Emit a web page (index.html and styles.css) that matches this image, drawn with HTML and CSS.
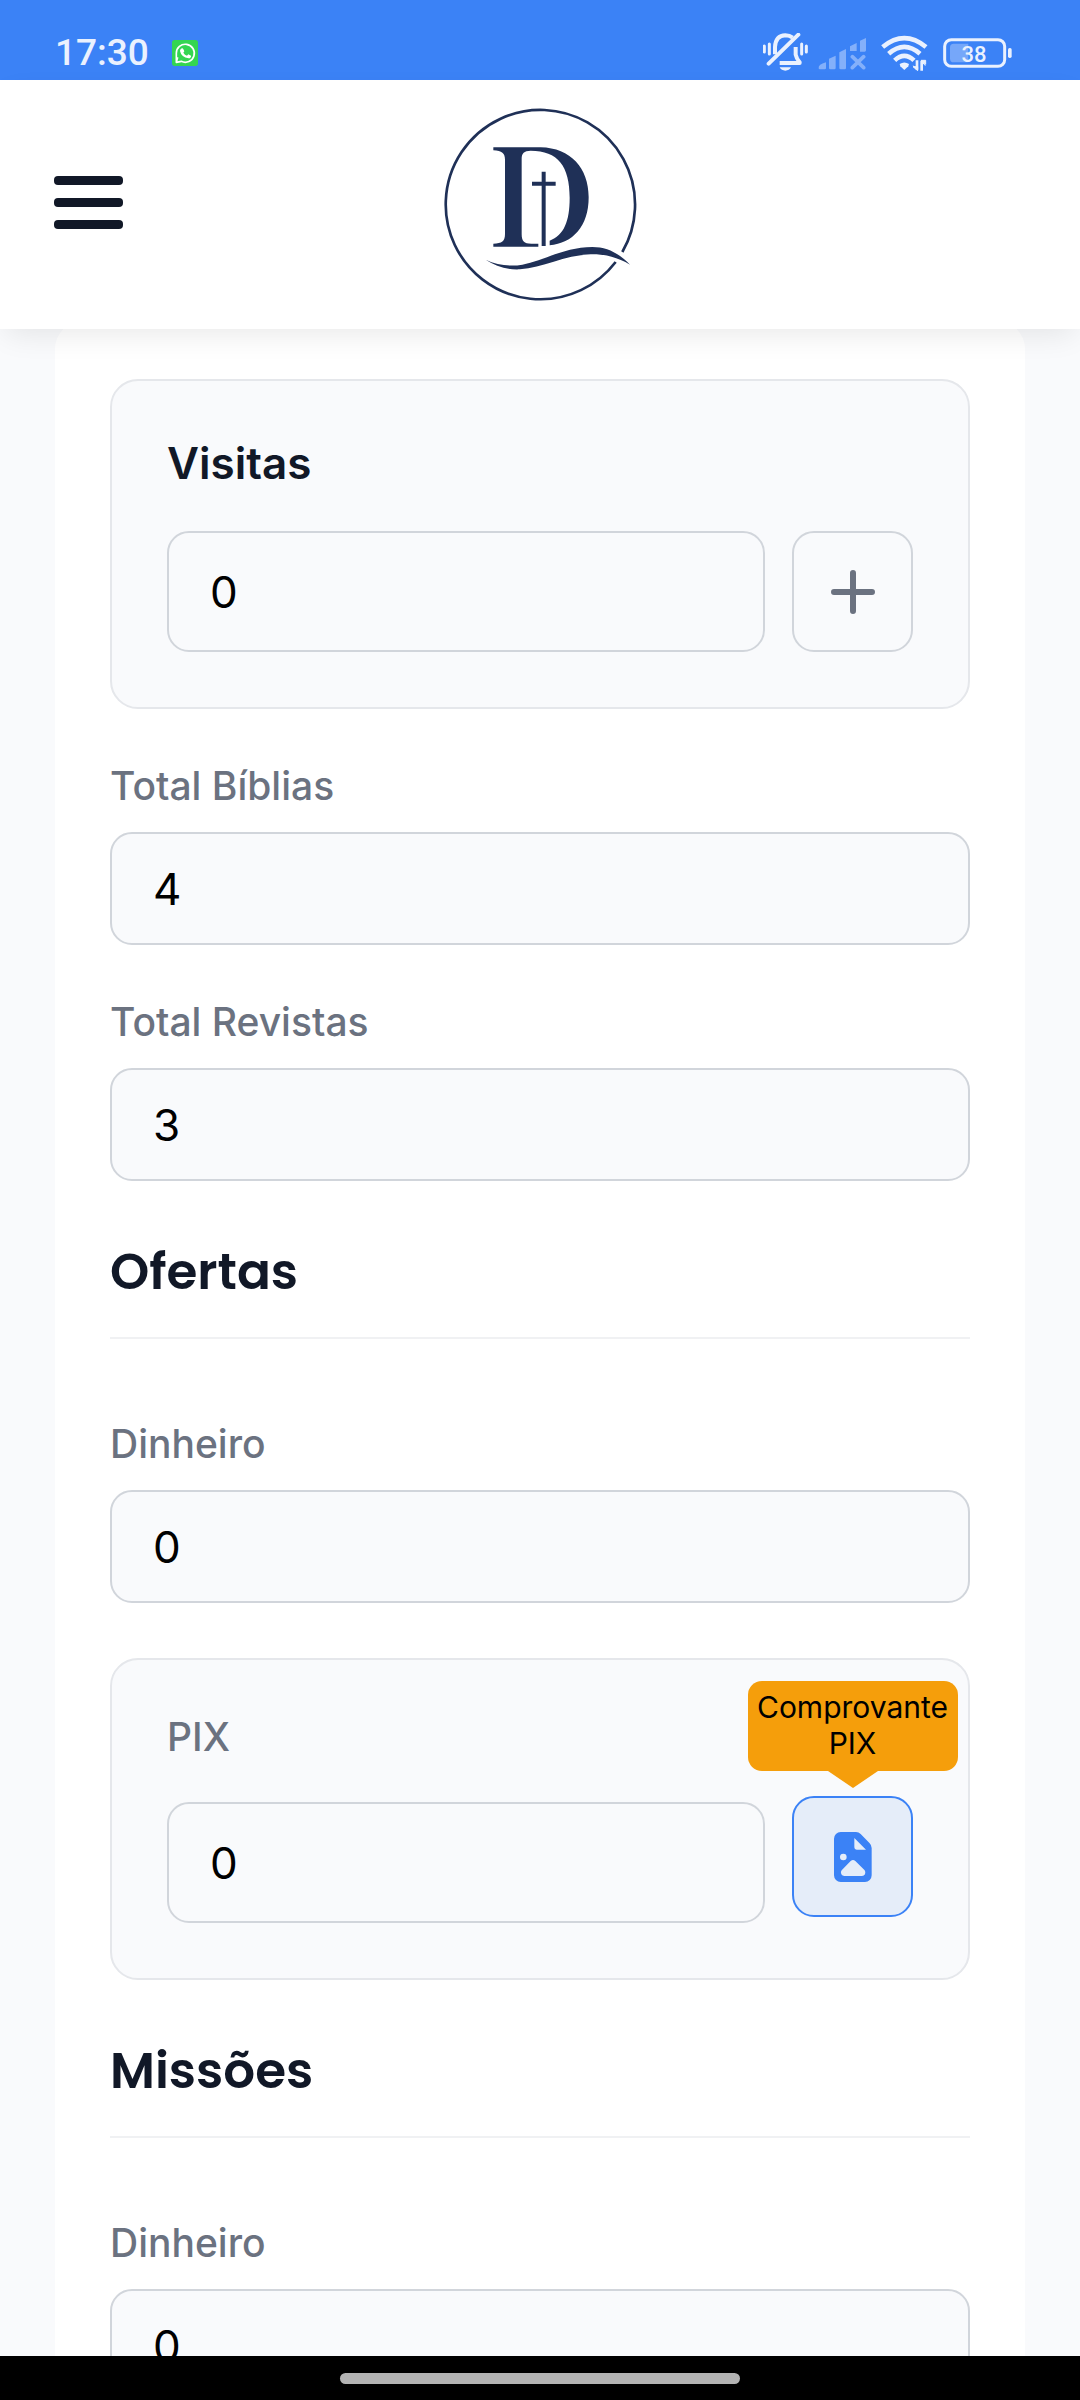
FILE: index.html
```html
<!DOCTYPE html>
<html lang="pt-BR">
<head>
  <meta charset="utf-8">
  <meta name="viewport" content="width=device-width, initial-scale=1">
  <title>Relatório</title>
  <link rel="stylesheet" href="styles.css">
</head>
<body>
  <div class="status">
    <div class="status-group">
      <span class="clock">17:30</span>
      <svg class="status-app" width="26" height="26" viewBox="0 0 78 78" aria-hidden="true">
        <rect width="78" height="78" rx="8" fill="#34d551"/>
        <path d="M13 67V40A27 27 0 1 1 28 64L13 67L17 52" fill="none" stroke="#fff" stroke-width="5" stroke-linejoin="round"/>
        <path d="M27 26q5-4 8 3l2 5-3 4q4 7 11 9l4-4 8 4q1 7-7 8Q28 52 24 33q0-5 3-7z" fill="#fff"/>
      </svg>
    </div>
    <div class="status-group status-icons">
      <svg width="45" height="39" viewBox="0 0 135 117" fill="none" stroke="#eaf1fe" stroke-linecap="round" aria-hidden="true">
        <path d="M4 39v18M19 33v30M116 33v30M130 39v18" stroke-width="9"/>
        <path d="M36 64V42q2-34 31-35q13 0 22 7M98 42V65q2 11 12 23v2H50" stroke-width="12" stroke-linejoin="round" stroke-linecap="butt"/>
        <path d="M17 92L106 5" stroke-width="12"/>
        <path d="M50 103h34q-5 10-17 10t-17-10z" fill="#eaf1fe" stroke="none"/>
      </svg>
      <svg width="48" height="36" viewBox="0 0 144 108" fill="#84b0fa" aria-hidden="true">
        <path d="M2 100q-2-12 22-18v18q0 3-4 3H6q-4 0-4-3zM33 71l20-9v37q0 4-4 4H37q-4 0-4-4zM64 52l20-10v57q0 4-4 4H68q-4 0-4-4zM96 34l20-10v24H96zM126 17l18-8v37q0 4-4 4h-14z"/>
        <path d="M103 65l34 33M137 65l-34 33" stroke="#84b0fa" stroke-width="11" stroke-linecap="round"/>
      </svg>
      <svg width="47" height="36" viewBox="0 0 141 108" fill="none" stroke="#eaf1fe" stroke-width="14" aria-hidden="true">
        <path d="M5 36Q70-17 135 36M23 56Q70 15 117 56M41 76Q70 49 99 76"/>
        <path d="M56 87q14-9 28 0l-2 7-12 11-12-11z" fill="#eaf1fe" stroke="none"/>
        <path d="M108 76v28M122 77v30" stroke-width="8"/>
        <path d="M96 95h14v12zM120 76h14v12zM97 92l11 13M133 92l-11-13" stroke-width="3" fill="#eaf1fe"/>
      </svg>
      <svg class="battery" width="70" height="30" viewBox="0 0 210 90" role="img" aria-label="Bateria 38%">
        <rect x="5" y="5" width="180" height="80" rx="20" fill="none" stroke="#eaf1fe" stroke-width="9"/>
        <path d="M32 17H76V73H32q-11 0-11-11V28q0-11 11-11z" fill="#76a7f9"/>
        <rect x="195" y="30" width="11" height="30" rx="5" fill="#eaf1fe"/>
        <text x="93" y="71" text-anchor="middle">38</text>
      </svg>
    </div>
  </div>

  <header class="header">
    <button class="menu" type="button" aria-label="Abrir menu">
      <svg width="69" height="57" viewBox="0 0 69 57" fill="#111827" aria-hidden="true">
        <rect width="69" height="9" rx="4"/>
        <rect y="22" width="69" height="9" rx="4"/>
        <rect y="44" width="69" height="9" rx="4"/>
      </svg>
    </button>
    <svg class="logo" width="195" height="195" viewBox="37 37 585 585" fill="#1f3057" role="img" aria-label="Logotipo">
      <path d="M575 472A284 284 0 1 0 555 502" fill="none" stroke="#1f3057" stroke-width="8"/>
      <path d="M188 158H330C420 160 474 220 474 308C474 396 426 446 357 452V438C400 422 417 380 417 310C417 214 382 168 300 168C280 168 273 176 273 192V418C273 440 280 447 302 447H323V456H188V447C214 446 223 440 223 418V195C223 176 214 168 188 167z"/>
      <path d="M333 231h12v30h30v12h-30v181h-12V273h-29v-12h29z"/>
      <path d="M165 495C200 512 240 516 275 510C335 500 400 457 485 457C530 457 565 476 598 510C560 487 520 478 480 479C400 482 335 520 268 524C230 526 195 515 165 495z"/>
    </svg>
  </header>

  <main class="content">
    <form class="card">
      <section class="panel panel-visits">
        <label class="panel-title" for="visitas">Visitas</label>
        <div class="row">
          <input class="input input-tall" id="visitas" type="text" inputmode="numeric" value="0">
          <button class="icon-button" type="button" aria-label="Adicionar visita">
            <svg width="44" height="44" viewBox="0 0 44 44" fill="none" stroke="#6b7280" stroke-width="6" stroke-linecap="round" aria-hidden="true">
              <path d="M22 3v38M3 22h38"/>
            </svg>
          </button>
        </div>
      </section>

      <div class="field">
        <label class="label" for="biblias">Total Bíblias</label>
        <input class="input" id="biblias" type="text" inputmode="numeric" value="4">
      </div>
      <div class="field">
        <label class="label" for="revistas">Total Revistas</label>
        <input class="input" id="revistas" type="text" inputmode="numeric" value="3">
      </div>

      <h2 class="section-title">Ofertas</h2>
      <div class="field">
        <label class="label" for="ofertas-dinheiro">Dinheiro</label>
        <input class="input" id="ofertas-dinheiro" type="text" inputmode="decimal" value="0">
      </div>
      <section class="panel panel-pix">
        <label class="label" for="ofertas-pix">PIX</label>
        <div class="row">
          <input class="input input-tall" id="ofertas-pix" type="text" inputmode="decimal" value="0">
          <div class="attach">
            <span class="tooltip" id="pix-tip" role="tooltip">Comprovante PIX</span>
            <button class="icon-button icon-button-active" type="button" aria-labelledby="pix-tip">
              <svg width="38" height="50" viewBox="0 0 114 150" aria-hidden="true">
                <path fill="#3b82f6" fill-rule="evenodd" d="M20 0H66a20 20 0 0 1 14 6L107 34a20 20 0 0 1 6 14V130a20 20 0 0 1-20 20H20a20 20 0 0 1-20-20V20A20 20 0 0 1 20 0zM61 18V46q0 7 7 7H96zM38 75a10 10 0 1 0-20 0a10 10 0 1 0 20 0zM50 87L23 115q-5 6-1 12q3 5 9 5H84q6 0 9-5q3-6-1-12L64 87q-7-6-14 0z"/>
              </svg>
            </button>
          </div>
        </div>
      </section>

      <h2 class="section-title">Missões</h2>
      <div class="field">
        <label class="label" for="missoes-dinheiro">Dinheiro</label>
        <input class="input" id="missoes-dinheiro" type="text" inputmode="decimal" value="0">
      </div>
    </form>
  </main>

  <div class="gesture-bar"><span class="gesture-handle"></span></div>
</body>
</html>
```
FILE: styles.css
```css
* {
  box-sizing: border-box;
}

body {
  margin: 0;
  height: 100vh;
  display: flex;
  flex-direction: column;
  background: #f9fafc;
  color: #111827;
  font-family: Inter, "Liberation Sans", sans-serif;
}

svg {
  display: block;
  flex: none;
}

button {
  margin: 0;
  padding: 0;
  border: 0;
  background: none;
  cursor: pointer;
}

/* System bar */
.status {
  flex: none;
  display: flex;
  align-items: center;
  justify-content: space-between;
  height: 80px;
  padding: 25px 67px 0 55px;
  background: #3b82f6;
}

.status-group {
  display: flex;
  align-items: center;
  gap: 23px;
}

.status-icons {
  gap: 15px;
}

.status-icons svg:nth-child(1) {
  margin-right: -5px;
}

.clock {
  color: #eaf1fe;
  font: 500 37px/44px Roboto, sans-serif;
}

.battery text {
  fill: #eaf1fe;
  font: 500 66px Roboto, sans-serif;
}

/* App header */
.header {
  position: relative;
  z-index: 1;
  flex: none;
  display: grid;
  grid-template-columns: 1fr auto 1fr;
  align-items: center;
  padding: 27px 54px;
  background: #fff;
  box-shadow: 0 11px 28px -6px rgba(0, 0, 0, 0.09);
}

.menu {
  justify-self: start;
}

/* Form */
.content {
  flex: 1;
  min-height: 0;
  padding: 0 55px;
  overflow: hidden auto;
  scrollbar-width: none;
}

.card {
  display: flex;
  flex-direction: column;
  gap: 55px;
  margin: -8px 0 55px;
  padding: 58px 55px 55px;
  border-radius: 28px;
  background: #fff;
}

.panel {
  display: flex;
  flex-direction: column;
  padding: 55px;
  border: 2px solid #e5e7eb;
  border-radius: 28px;
  background: #f9fafc;
}

.panel-visits {
  gap: 40px;
}

.panel-pix {
  gap: 37px;
}

.panel-title {
  font-size: 44px;
  font-weight: 600;
  line-height: 55px;
}

.row {
  display: flex;
  align-items: flex-end;
  gap: 27px;
}

.field {
  display: flex;
  flex-direction: column;
  gap: 24px;
}

.label {
  color: #6b7280;
  font-size: 39px;
  font-weight: 500;
  line-height: 44px;
}

.input {
  width: 100%;
  min-width: 0;
  height: 113px;
  padding: 0 41px;
  border: 2px solid #d1d5db;
  border-radius: 22px;
  background: #f9fafc;
  color: #000;
  font: 400 44px/53px Inter, "Liberation Sans", sans-serif;
}

.input-tall {
  flex: 1;
  height: 121px;
}

.icon-button {
  flex: none;
  display: flex;
  align-items: center;
  justify-content: center;
  width: 121px;
  height: 121px;
  border: 2px solid #d1d5db;
  border-radius: 22px;
}

.icon-button-active {
  border-color: #3b82f6;
  background: #e5edf9;
}

.attach {
  position: relative;
  flex: none;
  padding-bottom: 6px;
}

.tooltip {
  position: absolute;
  bottom: calc(100% + 25px);
  left: 50%;
  width: 210px;
  margin-left: -105px;
  padding: 8px 0 10px;
  border-radius: 14px;
  background: #f59e0b;
  color: #000;
  font-size: 30px;
  line-height: 36px;
  text-align: center;
}

.tooltip::after {
  content: "";
  position: absolute;
  top: 100%;
  left: 50%;
  margin-left: -25px;
  border: 25px solid transparent;
  border-top: 17px solid #f59e0b;
  border-bottom: 0;
}

.section-title {
  margin: 0 0 28px;
  padding-bottom: 29px;
  border-bottom: 2px solid #f0f1f3;
  font: 600 50px/72px Poppins, Inter, sans-serif;
}

/* System gesture area */
.gesture-bar {
  flex: none;
  display: flex;
  align-items: center;
  justify-content: center;
  height: 44px;
  background: #000;
}

.gesture-handle {
  width: 37%;
  height: 11px;
  border-radius: 6px;
  background: #b3b3b3;
}
```
